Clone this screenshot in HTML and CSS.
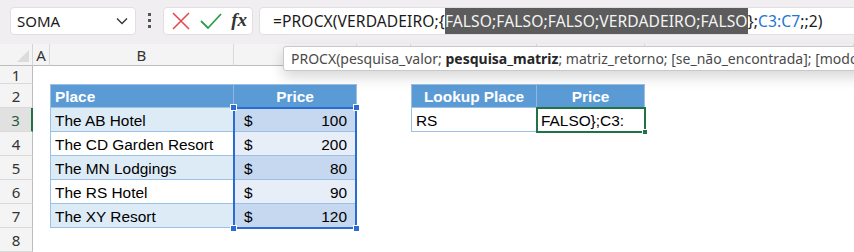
FILE: index.html
```html
<!DOCTYPE html>
<html lang="pt">
<head>
    <meta charset="UTF-8">
    <title>PROCX</title>
    <link rel="stylesheet" href="styles.css">
</head>
<body>
    <div class="toolbar">
        <div class="name-box">
            <span>SOMA</span>
            <svg class="chevron" width="12" height="8" viewBox="0 0 12 8"><path d="M1 1.5 L6 6.5 L11 1.5" fill="none" stroke="#333" stroke-width="1.3"/></svg>
        </div>
        <div class="dots"><i></i><i></i><i></i></div>
        <div class="fx-box">
            <svg width="18" height="18" viewBox="0 0 18 18"><path d="M1 1 L17 17 M17 1 L1 17" stroke="#e5484d" stroke-width="1.6"/></svg>
            <svg width="22" height="18" viewBox="0 0 22 18"><path d="M1 9 L8 16 L21 2" fill="none" stroke="#2e9e4a" stroke-width="1.8"/></svg>
            <span class="fx">fx</span>
        </div>
        <div class="formula-box">
            <span>=PROCX(VERDADEIRO;{</span><span class="hl">FALSO;FALSO;FALSO;VERDADEIRO;FALSO</span><span>};</span><span class="ref">C3:C7</span><span>;;2)</span>
        </div>
    </div>

    <div class="sheet">
        <!-- column headers (C onwards sit under the tooltip) -->
        <div class="corner"><i></i></div>
        <div class="ch">A</div>
        <div class="ch">B</div>
        <div class="ch"></div>
        <div class="ch"></div>
        <div class="ch"></div>
        <div class="ch"></div>
        <div class="ch"></div>

        <!-- row 1 -->
        <div class="rh">1</div>
        <div class="blank-row"></div>

        <!-- row 2 -->
        <div class="rh">2</div>
        <div class="cell"></div>
        <div class="cell th first">Place</div>
        <div class="cell th center last">Price</div>
        <div class="cell"></div>
        <div class="cell th center first">Lookup Place</div>
        <div class="cell th center last">Price</div>
        <div class="cell"></div>

        <!-- row 3 -->
        <div class="rh active">3</div>
        <div class="cell"></div>
        <div class="cell td band first">The AB Hotel</div>
        <div class="cell td sel-dark last money sel-top">
            <span>$</span><span>100</span>
            <div class="sel-range">
                <i class="handle tl"></i><i class="handle tr"></i><i class="handle bl"></i><i class="handle br"></i>
            </div>
        </div>
        <div class="cell"></div>
        <div class="cell td first">RS</div>
        <div class="cell td last editing">FALSO};C3:<i class="fill-handle"></i></div>
        <div class="cell"></div>

        <!-- row 4 -->
        <div class="rh">4</div>
        <div class="cell"></div>
        <div class="cell td first">The CD Garden Resort</div>
        <div class="cell td sel-light last money"><span>$</span><span>200</span></div>
        <div class="cell"></div>
        <div class="cell"></div>
        <div class="cell"></div>
        <div class="cell"></div>

        <!-- row 5 -->
        <div class="rh">5</div>
        <div class="cell"></div>
        <div class="cell td band first">The MN Lodgings</div>
        <div class="cell td sel-dark last money"><span>$</span><span>80</span></div>
        <div class="cell"></div>
        <div class="cell"></div>
        <div class="cell"></div>
        <div class="cell"></div>

        <!-- row 6 -->
        <div class="rh">6</div>
        <div class="cell"></div>
        <div class="cell td first">The RS Hotel</div>
        <div class="cell td sel-light last money"><span>$</span><span>90</span></div>
        <div class="cell"></div>
        <div class="cell"></div>
        <div class="cell"></div>
        <div class="cell"></div>

        <!-- row 7 -->
        <div class="rh">7</div>
        <div class="cell"></div>
        <div class="cell td band first">The XY Resort</div>
        <div class="cell td sel-dark last money"><span>$</span><span>120</span></div>
        <div class="cell"></div>
        <div class="cell"></div>
        <div class="cell"></div>
        <div class="cell"></div>

        <!-- row 8 -->
        <div class="rh">8</div>
        <div class="blank-row"></div>

        <div class="tooltip">PROCX(pesquisa_valor; <b>pesquisa_matriz</b>; matriz_retorno; [se_não_encontrada]; [modo</div>
    </div>
</body>
</html>
```

FILE: styles.css
```css
* {
    margin: 0;
    padding: 0;
    box-sizing: border-box;
}
body {
    width: 854px;
    height: 252px;
    overflow: hidden;
    background-color: #ffffff;
    font-family: "Noto Sans", sans-serif;
    color: #1a1a1a;
}

/* formula bar */
.toolbar {
    height: 44px;
    background-color: #f0eef0;
    display: flex;
    align-items: flex-start;
    padding: 7px 0 0 10px;
}
.name-box, .fx-box, .formula-box {
    height: 28px;
    background-color: #ffffff;
    border: 1px solid #e2dfe2;
    border-radius: 4px;
    display: flex;
    align-items: center;
}
.name-box {
    width: 126px;
    padding: 0 7px 0 6px;
    justify-content: space-between;
    font-size: 15px;
}
.dots {
    width: 27px;
    display: flex;
    flex-direction: column;
    align-items: center;
    gap: 3px;
    padding-top: 6px;
}
.dots i {
    width: 3px;
    height: 3px;
    background-color: #555;
}
.fx-box {
    width: 90px;
    padding: 0 5px 0 8px;
    justify-content: space-between;
}
.fx {
    font-family: "Liberation Serif", serif;
    font-style: italic;
    font-weight: bold;
    font-size: 19px;
    color: #333;
    padding-bottom: 2px;
}
.formula-box {
    flex: 1;
    margin-left: 6px;
    margin-right: -10px;
    padding-left: 13px;
    font-size: 15.6px;
    letter-spacing: 0.1px;
    white-space: nowrap;
    color: #1a1a1a;
}
.formula-box .hl {
    background-color: #5c5c5c;
    color: #f4f4f4;
    padding: 2px 0;
}
.formula-box .ref {
    color: #2476d2;
}

/* sheet grid */
.sheet {
    position: relative;
    display: grid;
    grid-template-columns: 33px 17px 184px 123px 54px 126px 108px 1fr;
    grid-template-rows: 22px 18px repeat(7, 24px);
}
.corner {
    background-color: #f4f4f4;
    border-right: 1px solid #d6d6d6;
    border-bottom: 1px solid #bdbdbd;
    position: relative;
}
.corner i {
    position: absolute;
    right: 3px;
    bottom: 3px;
    width: 0;
    height: 0;
    border-left: 12px solid transparent;
    border-bottom: 12px solid #dcdcdc;
}
.ch {
    background-color: #f4f4f4;
    border-right: 1px solid #dadada;
    border-bottom: 1px solid #bdbdbd;
    font-size: 15px;
    color: #333;
    display: flex;
    align-items: center;
    justify-content: center;
}
.rh {
    background-color: #f4f4f4;
    border-right: 1px solid #bdbdbd;
    border-bottom: 1px solid #dadada;
    font-size: 15px;
    color: #333;
    display: flex;
    align-items: center;
    justify-content: center;
}
.rh.active {
    background-color: #e1e1e1;
    border-right: 2px solid #217346;
    color: #1f5c3a;
}
.blank-row {
    grid-column: 2 / -1;
}

.cell {
    font-family: "Liberation Sans", Arial, sans-serif;
    font-size: 15.4px;
    color: #000;
    display: flex;
    align-items: center;
    padding: 2px 4px 0;
    white-space: nowrap;
}
.th {
    background-color: #5b9bd5;
    color: #ffffff;
    font-weight: bold;
    border-top: 1px solid #9bc2e6;
    border-bottom: 1px solid #9bc2e6;
}
.th.first {
    border-right: 1px solid #8fb8e0;
}
.center {
    justify-content: center;
}
.td {
    border-bottom: 1px solid #9bc2e6;
}
.first {
    border-left: 1px solid #9bc2e6;
}
.last {
    border-right: 1px solid #9bc2e6;
}
.band {
    background-color: #ddebf7;
}
.sel-dark {
    background-color: #c6d8ef;
}
.sel-light {
    background-color: #e8eef8;
}
.money {
    justify-content: space-between;
    padding: 2px 9px 0 10px;
}

/* selection C3:C7 */
.sel-top {
    position: relative;
}
.sel-range {
    position: absolute;
    left: -1px;
    top: -1px;
    width: calc(100% + 2px);
    height: 122px;
    border: 2px solid #2b6cd0;
}
.handle {
    position: absolute;
    width: 7px;
    height: 7px;
    background-color: #2b6cd0;
    border: 1px solid #ffffff;
}
.handle.tl { left: -5px; top: -5px; }
.handle.tr { right: -5px; top: -5px; }
.handle.bl { left: -5px; bottom: -5px; }
.handle.br { right: -5px; bottom: -5px; }

/* cell being edited, F3 */
.editing {
    position: relative;
    outline: 2px solid #217346;
    outline-offset: -1px;
}
.fill-handle {
    position: absolute;
    right: -4px;
    bottom: -4px;
    width: 6px;
    height: 6px;
    background-color: #217346;
    border: 1px solid #ffffff;
}

.tooltip {
    position: absolute;
    left: 283px;
    top: 2px;
    right: -20px;
    height: 25px;
    background-color: #ffffff;
    border: 1px solid #c9c9c9;
    border-radius: 3px;
    box-shadow: 0 6px 14px rgba(0, 0, 0, 0.16);
    padding: 0 0 0 7px;
    font-size: 14px;
    line-height: 23px;
    color: #4a4a4a;
    white-space: nowrap;
    overflow: hidden;
}
.tooltip b {
    color: #262626;
}
```
